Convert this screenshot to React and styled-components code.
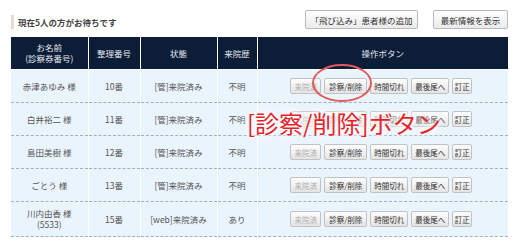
import React from "react";
import styled, { createGlobalStyle } from "styled-components";

const GlobalStyle = createGlobalStyle`
  html, body {
    margin: 0;
    padding: 0;
    background: #fff;
  }
  body {
    font-family: "Noto Sans CJK JP", "Noto Sans", sans-serif;
    color: #555;
  }
`;

const patients = [
  { name: "赤津あゆみ 様", num: "10番", state: "[管]来院済み", history: "不明" },
  { name: "白井裕二 様", num: "11番", state: "[管]来院済み", history: "不明" },
  { name: "島田美樹 様", num: "12番", state: "[管]来院済み", history: "不明" },
  { name: "ごとう 様", num: "13番", state: "[管]来院済み", history: "不明" },
  { name: "川内由香 様", sub: "(5533)", num: "15番", state: "[web]来院済み", history: "あり" },
];

const ops = [
  { label: "来院済", w: 31, disabled: true },
  { label: "診察/削除", w: 43 },
  { label: "時間切れ", w: 38 },
  { label: "最後尾へ", w: 38 },
  { label: "訂正", w: 20 },
];

const App = () => {
  return (
    <Page>
      <GlobalStyle />
      <TopBar>
        <Title>現在5人の方がお待ちです</Title>
        <TopActions>
          <TopButton width={113}>「飛び込み」患者様の追加</TopButton>
          <TopButton width={75}>最新情報を表示</TopButton>
        </TopActions>
      </TopBar>
      <Table>
        <colgroup>
          <col style={{ width: 77 }} />
          <col style={{ width: 52 }} />
          <col style={{ width: 77 }} />
          <col style={{ width: 40 }} />
          <col style={{ width: 251 }} />
        </colgroup>
        <thead>
          <tr>
            <Th>
              お名前
              <br />
              (診察券番号)
            </Th>
            <Th>整理番号</Th>
            <Th>状態</Th>
            <Th>来院歴</Th>
            <Th last>操作ボタン</Th>
          </tr>
        </thead>
        <tbody>
          {patients.map((p) => (
            <Row key={p.num} tall={!!p.sub}>
              <Td>
                {p.name}
                {p.sub && (
                  <>
                    <br />
                    {p.sub}
                  </>
                )}
              </Td>
              <Td>{p.num}</Td>
              <Td>{p.state}</Td>
              <Td>{p.history}</Td>
              <Td last>
                <OpGroup>
                  {ops.map((o) => (
                    <OpButton key={o.label} width={o.w} disabled={o.disabled}>
                      {o.label}
                    </OpButton>
                  ))}
                </OpGroup>
              </Td>
            </Row>
          ))}
        </tbody>
      </Table>
      <Circle width="62" height="40" viewBox="0 0 62 40">
        <ellipse cx="31" cy="20" rx="29" ry="18" fill="none" stroke="#e25a5a" strokeWidth="2" />
      </Circle>
      <Callout>[診察/削除]ボタン</Callout>
    </Page>
  );
};

export default App;

const Page = styled.div`
  position: relative;
  width: 520px;
  height: 246px;
  padding: 10px 12px 0 11px;
  box-sizing: border-box;
  overflow: hidden;
`;

const TopBar = styled.div`
  display: flex;
  justify-content: space-between;
  align-items: flex-start;
  height: 27px;
`;

const Title = styled.div`
  margin-top: 5px;
  border-left: 3px solid #e6dccd;
  padding-left: 4px;
  height: 14px;
  line-height: 14px;
  font-size: 8.5px;
  font-weight: bold;
  color: #444;
`;

const TopActions = styled.div`
  display: flex;
  gap: 15px;
`;

const TopButton = styled.div`
  width: ${(p) => p.width}px;
  height: 19px;
  box-sizing: border-box;
  border: 1px solid #b9b9b9;
  border-radius: 2px;
  background: linear-gradient(#ffffff, #ebebeb);
  display: flex;
  align-items: center;
  justify-content: center;
  font-size: 8.5px;
  color: #333;
  white-space: nowrap;
`;

const Table = styled.table`
  width: 497px;
  table-layout: fixed;
  border-collapse: collapse;
  font-size: 8.5px;
`;

const Th = styled.th`
  background: #0c1d38;
  color: #e6e9ef;
  font-weight: normal;
  height: 32px;
  padding: 0;
  line-height: 11px;
  text-align: center;
  border-right: ${(p) => (p.last ? "none" : "1px solid #fff")};
  border-bottom: 1px solid #fff;
`;

const Row = styled.tr`
  height: ${(p) => (p.tall ? 35 : 33)}px;
`;

const Td = styled.td`
  background: #eaf4fd;
  color: #555;
  padding: 0;
  line-height: 11px;
  text-align: center;
  border-right: ${(p) => (p.last ? "none" : "1px solid #fff")};
  border-bottom: 1px dashed #9fb0c4;
`;

const OpGroup = styled.div`
  display: flex;
  justify-content: center;
  gap: 3px;
  padding-right: 3px;
`;

const OpButton = styled.div`
  width: ${(p) => p.width}px;
  height: 16px;
  box-sizing: border-box;
  border: 1px solid #c2c2c2;
  border-radius: 2px;
  background: linear-gradient(#fdfdfd, #e4e4e4);
  display: flex;
  align-items: center;
  justify-content: center;
  font-size: 7.5px;
  color: ${(p) => (p.disabled ? "#b0b0b0" : "#333")};
  white-space: nowrap;
`;

const Circle = styled.svg`
  position: absolute;
  left: 311px;
  top: 63px;
`;

const Callout = styled.div`
  position: absolute;
  left: 247px;
  top: 109px;
  font-size: 24px;
  line-height: 27px;
  color: #e5222a;
  white-space: nowrap;
  text-shadow: 0 0 3px #fff, 0 0 6px #fff, 0 0 10px #fff, 0 0 14px #fff;
`;
